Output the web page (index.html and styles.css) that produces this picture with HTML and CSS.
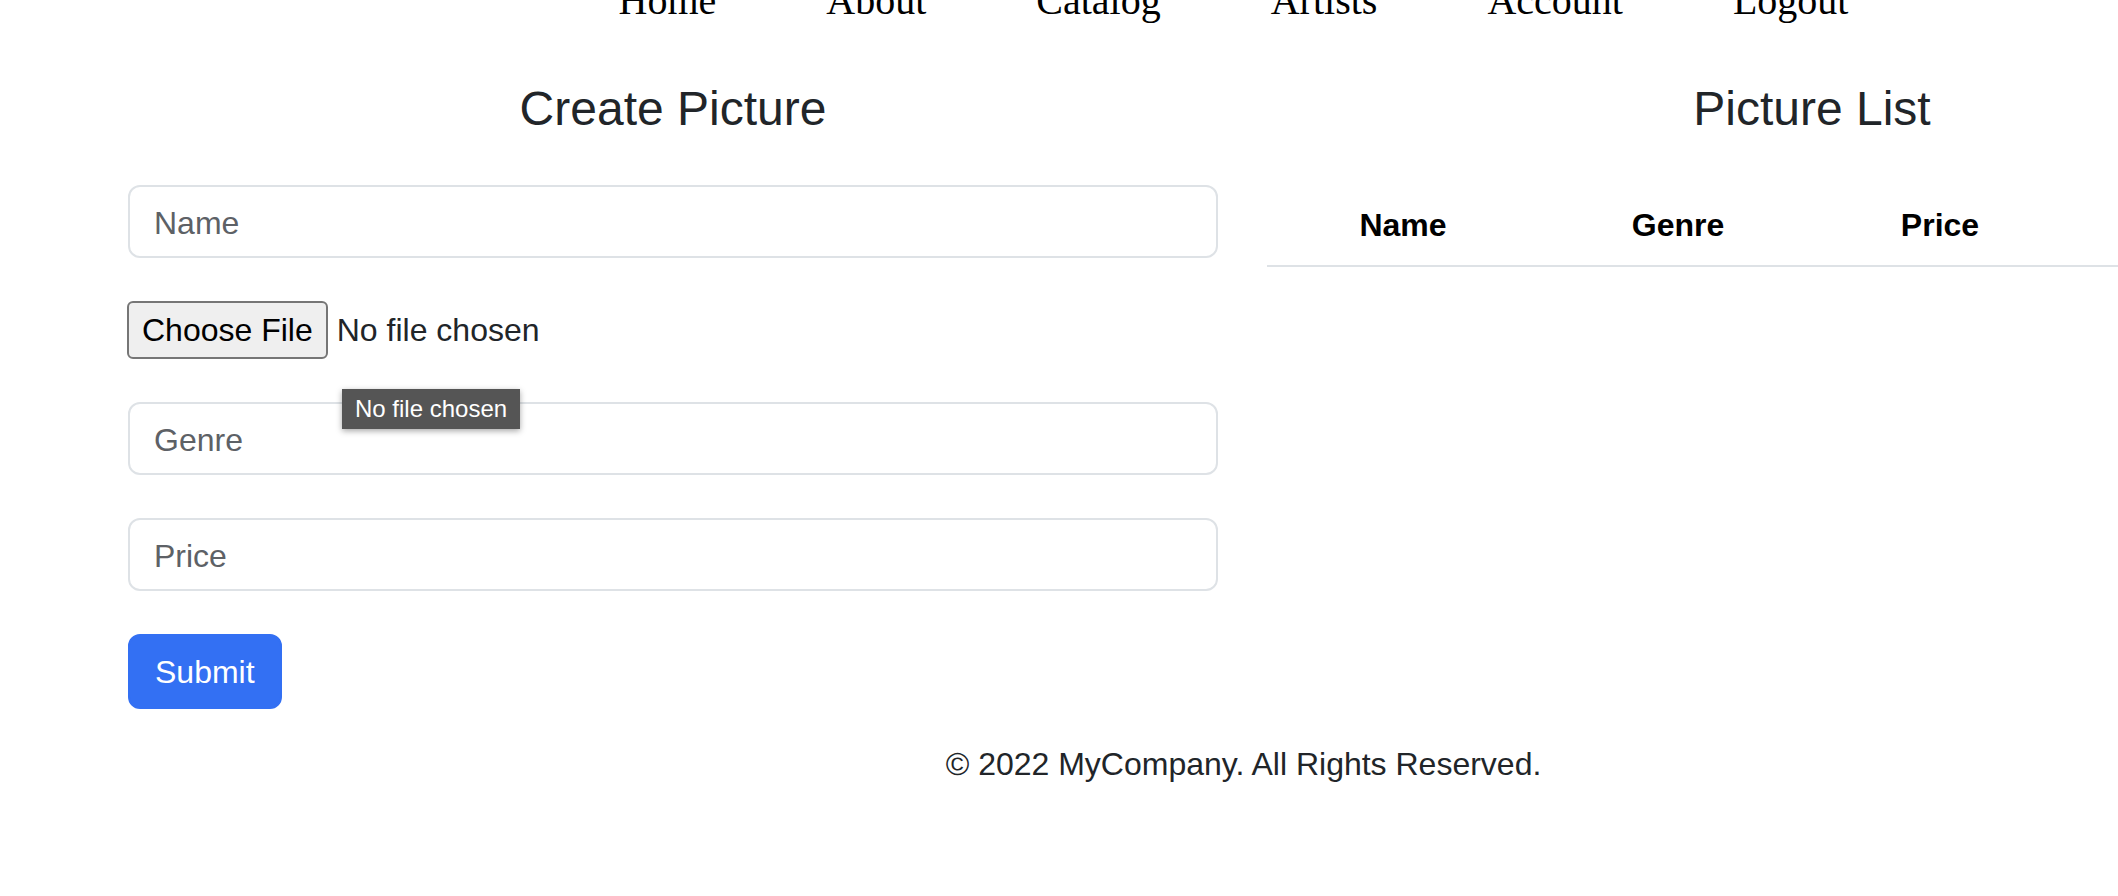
FILE: index.html
```html
<!DOCTYPE html>
<html lang="en">
<head>
<meta charset="utf-8">
<title>Pictures</title>
<link rel="stylesheet" href="styles.css">
</head>
<body>
<div class="page">
  <nav class="topnav">
    <a href="#">Home</a>
    <a href="#">About</a>
    <a href="#">Catalog</a>
    <a href="#">Artists</a>
    <a href="#">Account</a>
    <a href="#">Logout</a>
  </nav>

  <main class="content">
    <section class="col">
      <h4 class="col-title">Create Picture</h4>
      <form class="form">
        <input class="field" type="text" placeholder="Name">
        <div class="file">
          <span class="file-btn">Choose File</span>
          <span class="file-name">No file chosen</span>
          <span class="tooltip">No file chosen</span>
        </div>
        <input class="field" type="text" placeholder="Genre">
        <input class="field" type="text" placeholder="Price">
        <div class="actions">
          <button class="btn-submit" type="button">Submit</button>
        </div>
      </form>
    </section>

    <section class="col">
      <h4 class="col-title">Picture List</h4>
      <table class="list">
        <colgroup>
          <col class="c-name">
          <col class="c-genre">
          <col class="c-price">
          <col class="c-rest">
        </colgroup>
        <thead>
          <tr>
            <th>Name</th>
            <th>Genre</th>
            <th>Price</th>
            <th></th>
          </tr>
        </thead>
        <tbody></tbody>
      </table>
    </section>
  </main>

  <footer class="footer">© 2022 MyCompany. All Rights Reserved.</footer>
</div>
</body>
</html>
```

FILE: styles.css
```css
html {
  overflow: hidden;
}

body {
  margin: 0;
  background: #ffffff;
  color: #212529;
  font-family: "Liberation Sans", Arial, Helvetica, sans-serif;
  font-size: 32px;
  line-height: 1.5;
}

.page {
  width: 2487px;
}

/* top navigation */
.topnav {
  display: flex;
  justify-content: center;
  gap: 110px;
  height: 40px;
  margin-top: -19px;
  padding-right: 20px;
  font-family: "Liberation Serif", "Times New Roman", serif;
  font-size: 40px;
  line-height: 40px;
}

.topnav a {
  color: #000000;
  text-decoration: none;
}

/* two columns */
.content {
  display: flex;
  gap: 49px;
  margin-top: 59px;
  padding: 0 128px;
}

.col {
  width: 1090px;
  flex: 0 0 1090px;
}

.col-title {
  margin: 0 0 47px;
  font-size: 48px;
  font-weight: 400;
  line-height: 58px;
  text-align: center;
  color: #212529;
}

/* form */
.form {
  display: flex;
  flex-direction: column;
  gap: 43px;
}

.field {
  box-sizing: border-box;
  width: 100%;
  height: 73px;
  margin: 0;
  padding: 4px 24px 0;
  border: 2px solid #dee2e6;
  border-radius: 12px;
  background: #ffffff;
  font-family: inherit;
  font-size: 32px;
  color: #212529;
  outline: none;
}

.field::placeholder {
  color: #5d6166;
}

.file {
  position: relative;
  display: flex;
  align-items: center;
  gap: 9px;
  height: 58px;
}

.file-btn {
  box-sizing: border-box;
  height: 58px;
  display: flex;
  align-items: center;
  padding: 0 13px;
  margin-left: -1px;
  border: 2px solid #767676;
  border-radius: 6px;
  background: #efefef;
  color: #000000;
  font-size: 32px;
}

.file-name {
  color: #212529;
  font-size: 32px;
}

.tooltip {
  position: absolute;
  left: 214px;
  top: 88px;
  box-sizing: border-box;
  height: 40px;
  padding: 0 13px;
  display: flex;
  align-items: center;
  background: #555555;
  color: #ffffff;
  font-size: 24px;
  line-height: 1;
  box-shadow: 0 2px 6px rgba(0, 0, 0, 0.35);
  white-space: nowrap;
}

.actions {
  display: flex;
}

.btn-submit {
  box-sizing: border-box;
  height: 75px;
  padding: 0 25px;
  border: 2px solid #3370f3;
  border-radius: 12px;
  background: #3370f3;
  color: #ffffff;
  font-family: inherit;
  font-size: 32px;
  line-height: 1.5;
}

/* table */
.list {
  width: 100%;
  border-collapse: collapse;
  table-layout: fixed;
}

.c-name { width: 272px; }
.c-genre { width: 278px; }
.c-price { width: 246px; }

.list th {
  padding: 16px 0;
  font-size: 32px;
  font-weight: 700;
  line-height: 48px;
  color: #000000;
  text-align: center;
  border-bottom: 2px solid #dee2e6;
}

/* footer */
.footer {
  padding: 31px 128px 0;
  text-align: center;
  font-size: 32px;
  line-height: 48px;
  color: #212529;
}
```
